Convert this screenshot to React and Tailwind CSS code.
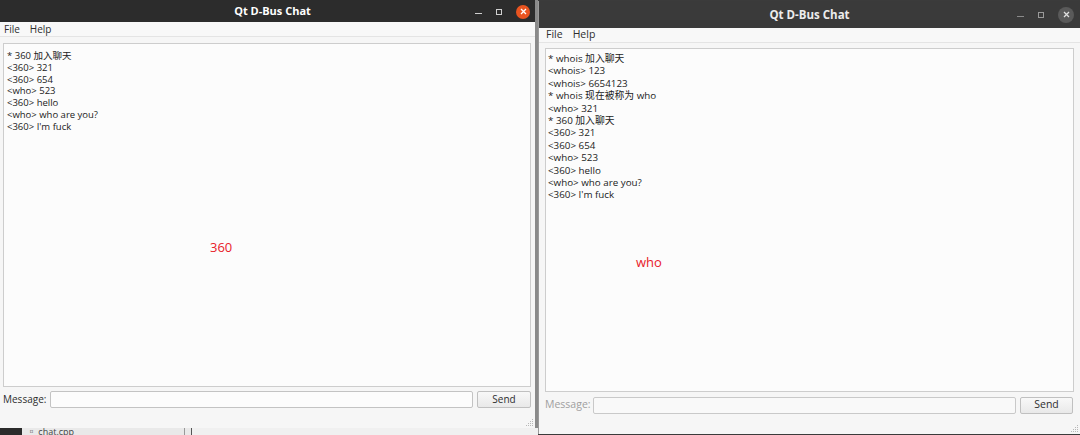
import React from "react";

const leftLines = [
  "* 360 加入聊天",
  "<360> 321",
  "<360> 654",
  "<who> 523",
  "<360> hello",
  "<who> who are you?",
  "<360> I'm fuck",
];

const rightLines = [
  "* whois 加入聊天",
  "<whois> 123",
  "<whois> 6654123",
  "* whois 现在被称为 who",
  "<who> 321",
  "* 360 加入聊天",
  "<360> 321",
  "<360> 654",
  "<who> 523",
  "<360> hello",
  "<who> who are you?",
  "<360> I'm fuck",
];

const font = { fontFamily: '"Open Sans", "Noto Sans", "Noto Sans CJK SC", sans-serif' };

function Grip() {
  return (
    <svg width="8" height="8" viewBox="0 0 8 8" className="absolute right-[1px] bottom-[1px]">
      {[[6, 0], [4, 2], [6, 2], [2, 4], [4, 4], [6, 4], [0, 6], [2, 6], [4, 6], [6, 6]].map(([x, y], i) => (
        <rect key={i} x={x} y={y} width="1" height="1" fill="#b8b8b8" />
      ))}
    </svg>
  );
}

export default function App() {
  return (
    <div className="w-[1080px] h-[435px] flex bg-[#3b3b3b] overflow-hidden text-[#2e2e2e]" style={font}>
      {/* Left window */}
      <div className="w-[538px] h-[435px] flex flex-col">
        <div className="flex h-[428px]">
          <div className="w-[535px] h-[428px] flex flex-col bg-[#f6f6f6] relative">
            <div className="h-[23px] bg-[#2c2c2c] flex items-center relative">
              <div className="flex-1 text-center text-white text-[11px] font-bold pl-[10px]">Qt D-Bus Chat</div>
              <div className="absolute right-[5px] top-0 h-[23px] flex items-center gap-[14px]">
                <div className="w-[7px] h-[1px] bg-[#cfcfcf] mt-[4px]" />
                <div className="w-[6px] h-[6px] border border-[#cfcfcf]" />
                <div className="w-[14px] h-[14px] rounded-full bg-[#e95420] flex items-center justify-center">
                  <svg width="7" height="7" viewBox="0 0 7 7"><path d="M1 1L6 6M6 1L1 6" stroke="#fff" strokeWidth="1.3" /></svg>
                </div>
              </div>
            </div>
            <div className="h-[15px] flex items-center text-[10px] gap-[10px] pl-[4px] border-b border-[#e4e4e4] bg-[#f8f8f8]">
              <span>File</span>
              <span>Help</span>
            </div>
            <div className="flex-1 flex flex-col pl-[3px] pr-[4px] pt-[6px] pb-[20px]">
              <div className="h-[344px] bg-[#fcfcfc] border border-[#cdcdcd] relative pt-[6px] pl-[3px] text-[9.5px] leading-[11.8px] text-[#222]">
                {leftLines.map((l, i) => (
                  <div key={i}>{l}</div>
                ))}
                <div className="absolute left-[206px] top-[198px] text-[13px] text-[#e8202a]">360</div>
              </div>
              <div className="flex items-center mt-[3px] h-[18px]">
                <span className="text-[10px] w-[47px]">Message:</span>
                <div className="w-[423px] h-[17px] bg-[#fcfcfc] border border-[#c3c3c3] rounded-[2px]" />
                <div className="ml-[4px] flex-1 h-[17px] border border-[#c0c0c0] rounded-[2px] bg-gradient-to-b from-[#f8f8f8] to-[#e9e9e9] text-[10px] flex items-center justify-center">Send</div>
              </div>
            </div>
            <Grip />
          </div>
          <div className="flex-1 bg-[#8a8a8a]" />
        </div>
        <div className="flex-1 flex">
          <div className="w-[22px] bg-[#2b2b2b]" />
          <div className="w-[162px] bg-[#e9e9e9] text-[9px] leading-[7px] pl-[5px] text-[#444] overflow-hidden">▫ chat.cpp</div>
          <div className="w-[1px] bg-[#999]" />
          <div className="w-[6px] bg-[#e9e9e9]" />
          <div className="w-[1px] bg-[#555]" />
          <div className="flex-1 bg-[#f0f0f0]" />
        </div>
      </div>
      {/* Right window */}
      <div className="flex-1 h-[433px] mt-[1px] flex flex-col bg-[#f6f6f6] relative border-l border-[#9a9a9a]">
        <div className="h-[27px] bg-[#3a3a3a] flex items-center relative">
          <div className="flex-1 text-center text-[#ececec] text-[11.5px] font-bold">Qt D-Bus Chat</div>
          <div className="absolute right-[6px] top-0 h-[27px] flex items-center gap-[14px]">
            <div className="w-[7px] h-[1px] bg-[#8a8a8a] mt-[4px]" />
            <div className="w-[6px] h-[6px] border border-[#9a9a9a]" />
            <div className="w-[16px] h-[16px] rounded-full bg-[#5a5a5a] flex items-center justify-center">
              <svg width="7" height="7" viewBox="0 0 7 7"><path d="M1 1L6 6M6 1L1 6" stroke="#e0e0e0" strokeWidth="1.3" /></svg>
            </div>
          </div>
        </div>
        <div className="h-[15px] flex items-center text-[10.5px] gap-[10px] pl-[7px] border-b border-[#e4e4e4] bg-[#f8f8f8]">
          <span>File</span>
          <span>Help</span>
        </div>
        <div className="flex-1 flex flex-col pl-[6px] pr-[6px] pt-[5px] pb-[20px]">
          <div className="h-[344px] bg-[#fcfcfc] border border-[#cdcdcd] relative pt-[4px] pl-[2px] text-[9.8px] leading-[12.4px] text-[#222]">
            {rightLines.map((l, i) => (
              <div key={i}>{l}</div>
            ))}
            <div className="absolute left-[90px] top-[207px] text-[13px] text-[#e8202a]">who</div>
          </div>
          <div className="flex items-center mt-[4px] h-[18px]">
            <span className="text-[10.5px] w-[48px] text-[#a0a0a0]">Message:</span>
            <div className="w-[423px] h-[17px] bg-[#f9f9f9] border border-[#c9c9c9] rounded-[2px]" />
            <div className="ml-[4px] w-[53px] h-[17px] border border-[#c0c0c0] rounded-[2px] bg-gradient-to-b from-[#f8f8f8] to-[#e9e9e9] text-[10.5px] flex items-center justify-center">Send</div>
          </div>
        </div>
        <Grip />
      </div>
    </div>
  );
}
